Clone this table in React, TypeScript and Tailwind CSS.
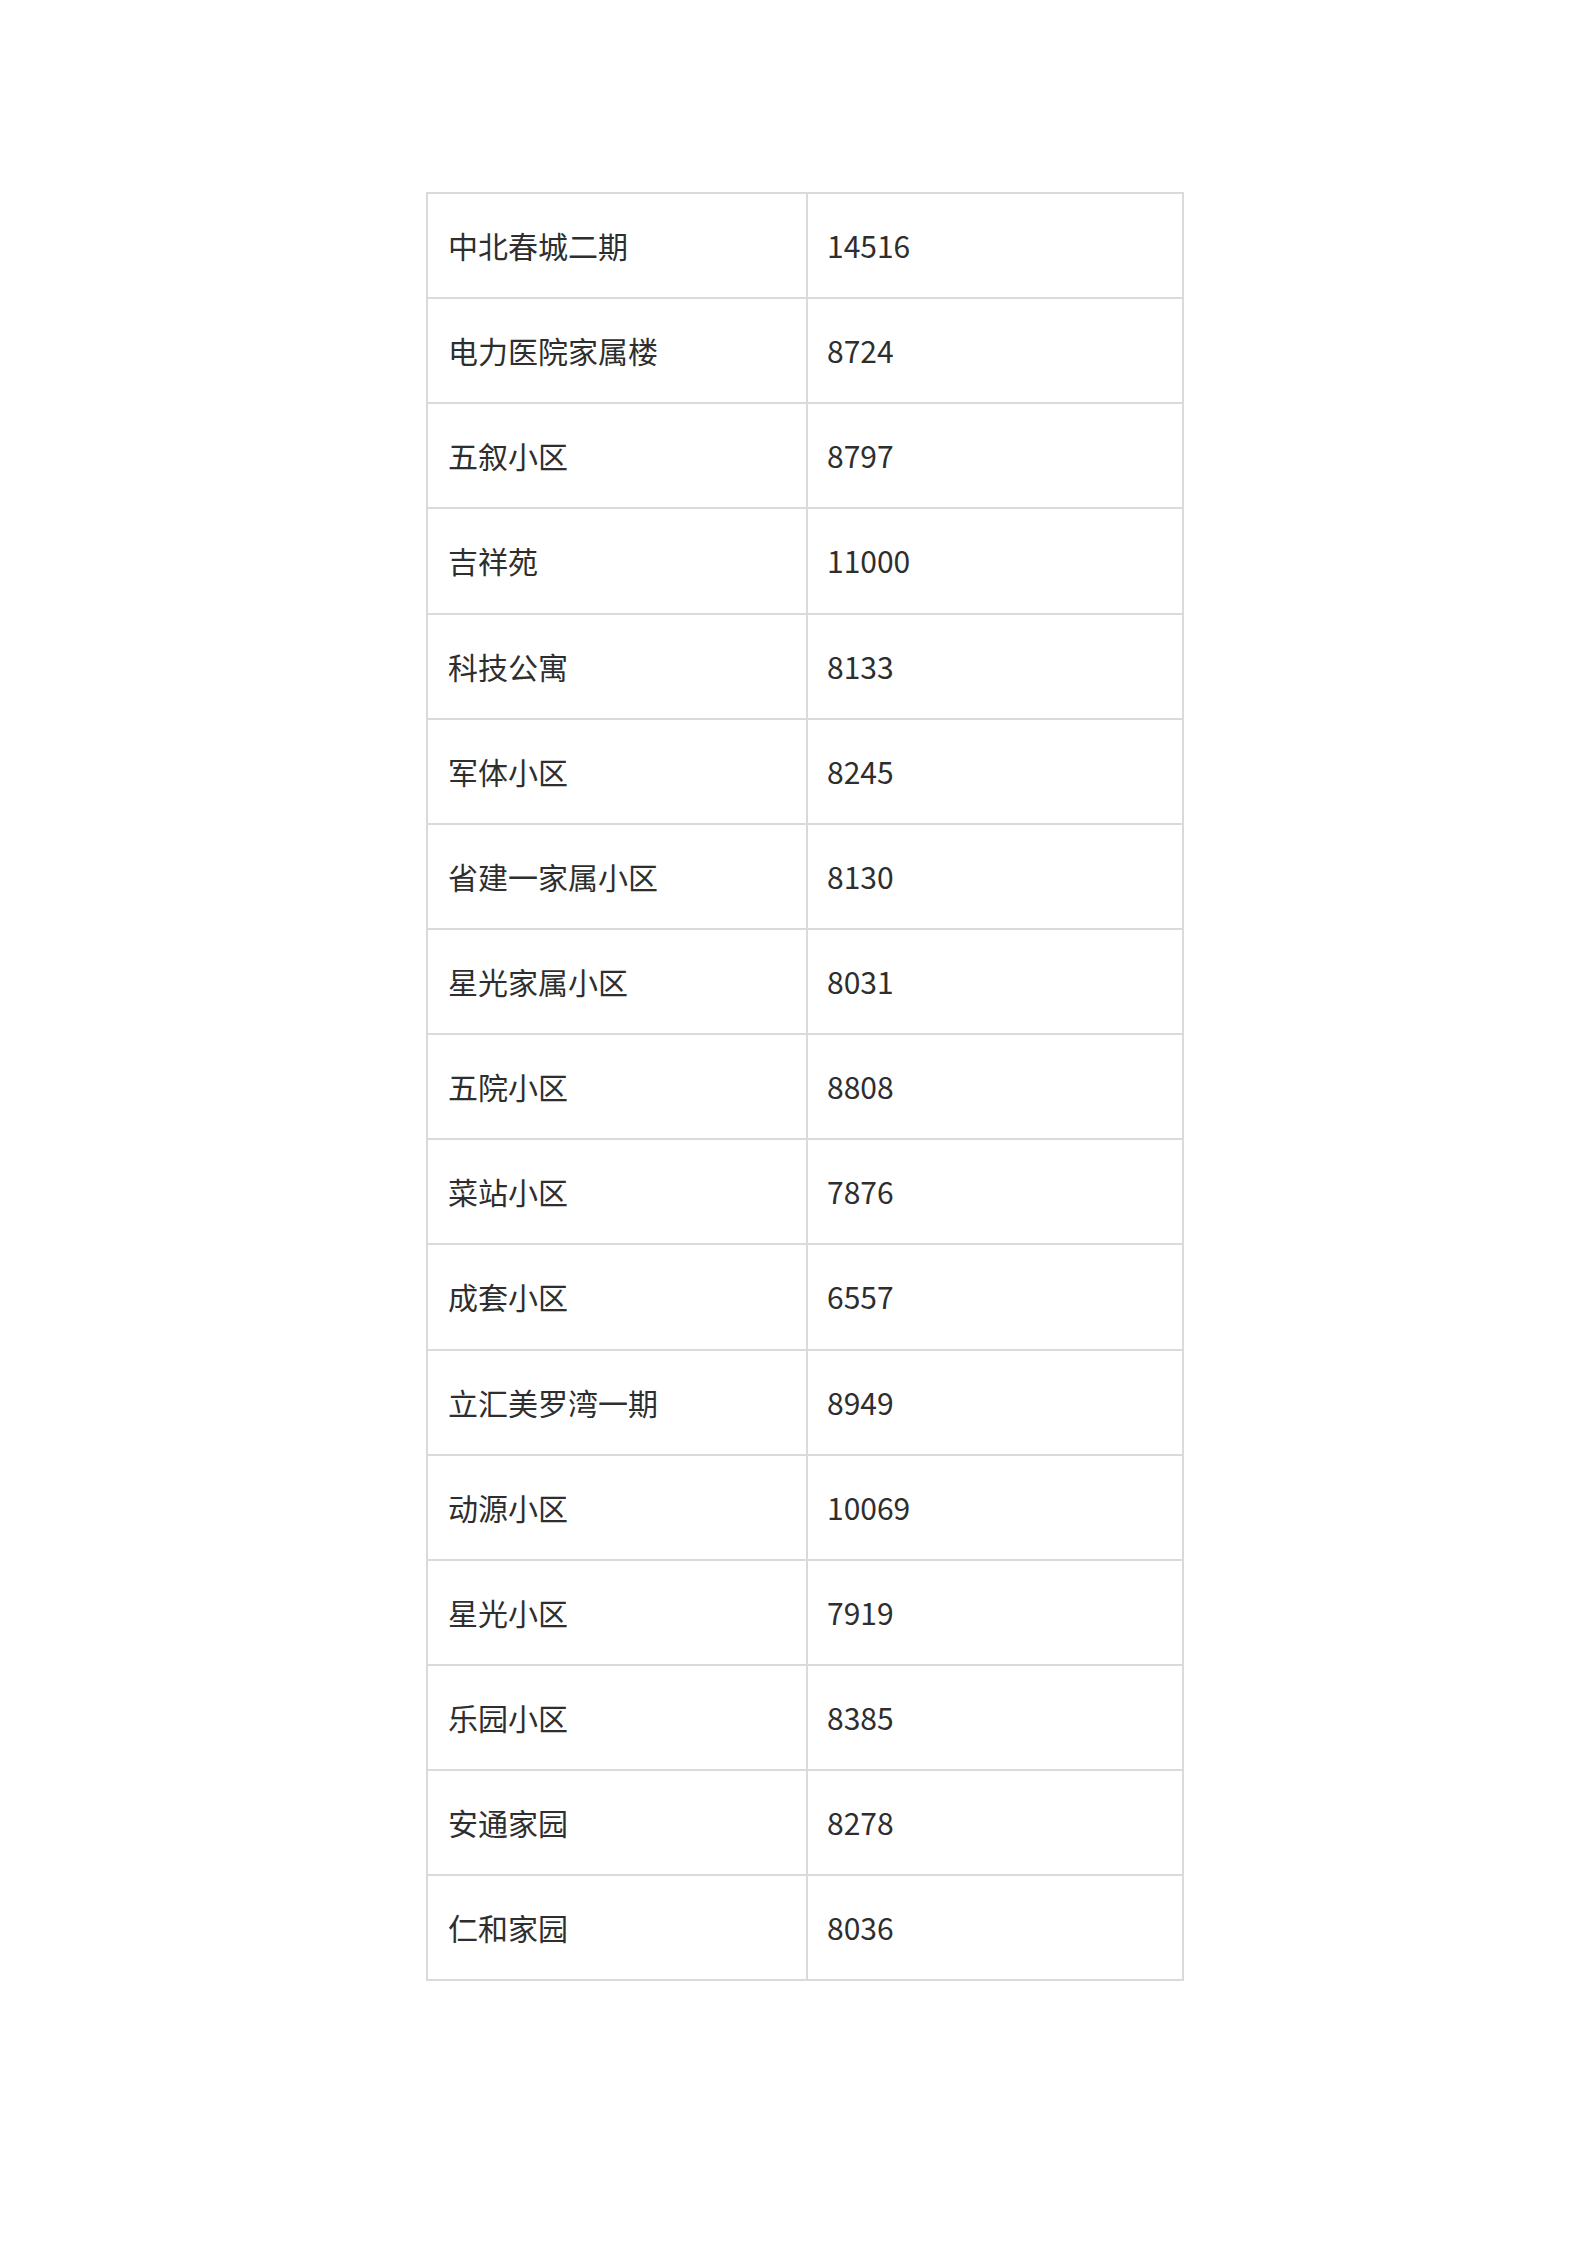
const rows: [string, string][] = [
  ['中北春城二期', '14516'],
  ['电力医院家属楼', '8724'],
  ['五叙小区', '8797'],
  ['吉祥苑', '11000'],
  ['科技公寓', '8133'],
  ['军体小区', '8245'],
  ['省建一家属小区', '8130'],
  ['星光家属小区', '8031'],
  ['五院小区', '8808'],
  ['菜站小区', '7876'],
  ['成套小区', '6557'],
  ['立汇美罗湾一期', '8949'],
  ['动源小区', '10069'],
  ['星光小区', '7919'],
  ['乐园小区', '8385'],
  ['安通家园', '8278'],
  ['仁和家园', '8036'],
];

export default function App() {
  return (
    <div className="min-h-[2245px] w-[1587px] bg-white pl-[426px] pt-[192px] font-['Noto_Sans_CJK_SC',sans-serif] text-[30px] text-[#2e2e2e]">
      <div className="grid w-[758px] grid-cols-[380px_376px] border-t-2 border-l-2 border-[#dadada]">
        {rows.map(([name, value]) => (
          <div key={name} className="contents">
            <div className="flex h-[105.15px] items-center border-r-2 border-b-2 border-[#dadada] pl-5">{name}</div>
            <div className="flex h-[105.15px] items-center border-r-2 border-b-2 border-[#dadada] pl-[19px]">{value}</div>
          </div>
        ))}
      </div>
    </div>
  );
}
